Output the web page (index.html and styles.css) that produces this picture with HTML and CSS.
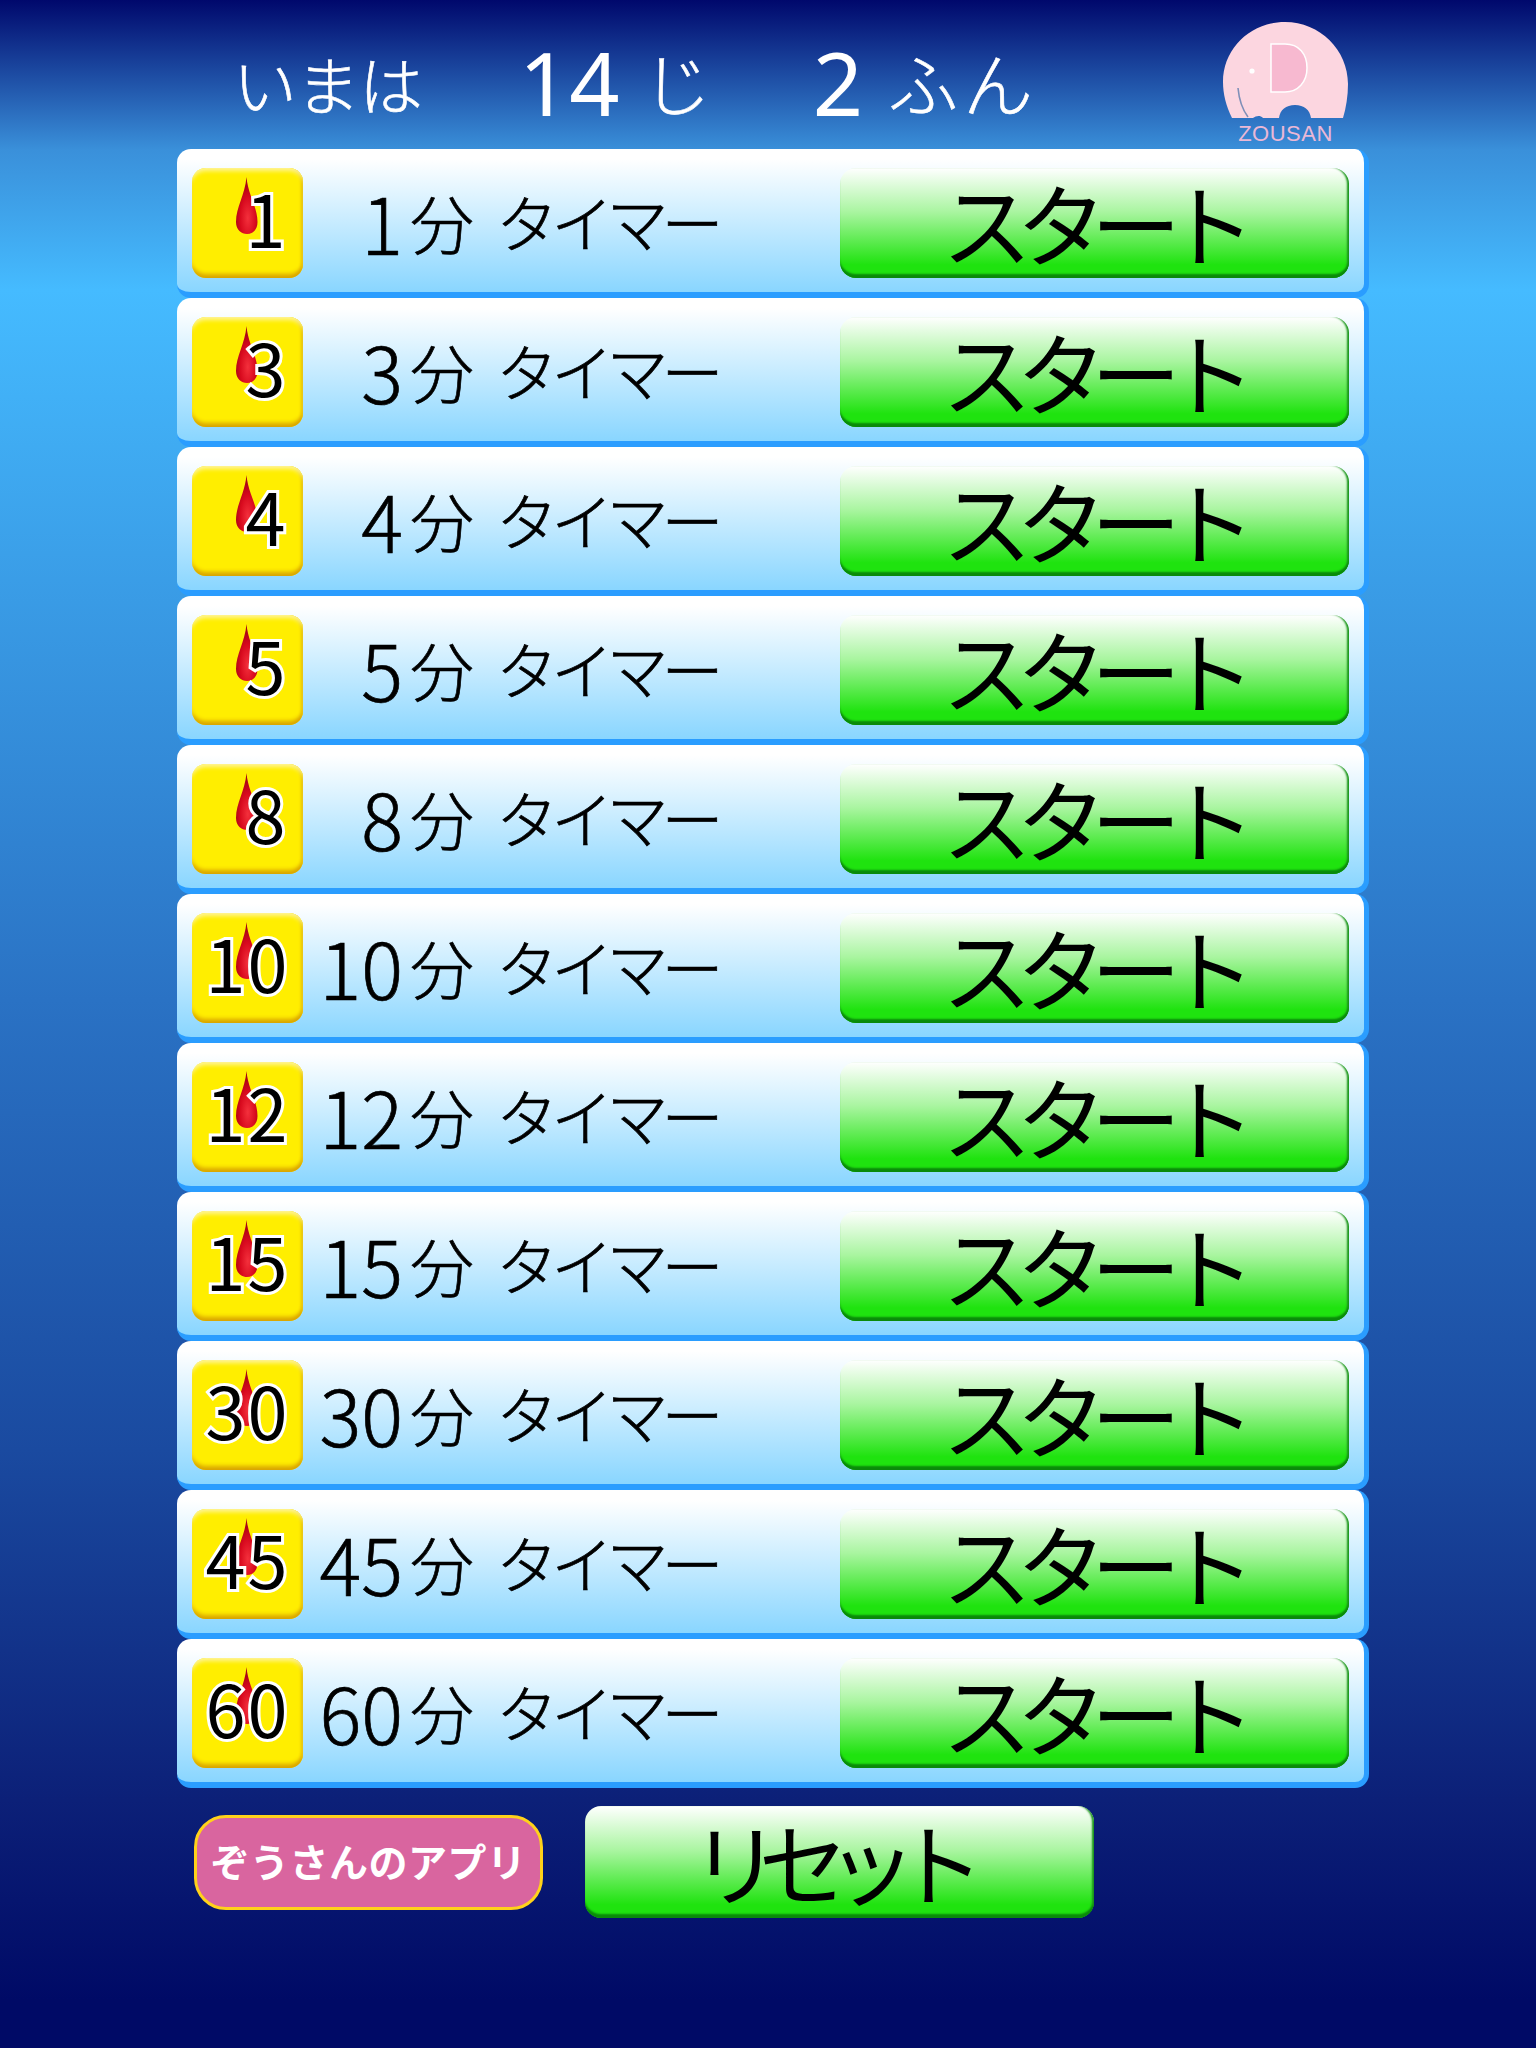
FILE: index.html
```html
<!DOCTYPE html>
<html lang="ja">
<head>
<meta charset="UTF-8">
<title>タイマー</title>
<link rel="stylesheet" href="styles.css">
</head>
<body>
<svg class="defs" width="0" height="0">
  <defs>
    <radialGradient id="dropFill" cx="0.55" cy="0.72" r="0.6">
      <stop offset="0" stop-color="#f4303c"/>
      <stop offset="0.6" stop-color="#d80a1e"/>
      <stop offset="1" stop-color="#a80414"/>
    </radialGradient>
    <symbol id="drop" viewBox="0 0 22 58">
      <path fill="url(#dropFill)" d="M10.500 0c1.500 18 11 30 11 45 0 8-5 12-10.500 12S0 53 0 45C0 30 9 18 10.500 0z"/>
    </symbol>
  </defs>
</svg>
<div id="container">
  <div class="header">
    <span class="now">いまは</span>
    <span class="big hour">14</span>
    <span class="unit ji">じ</span>
    <span class="big minute">2</span>
    <span class="unit fun">ふん</span>
    <div class="logo">
      <svg class="elephant" width="125" height="97" viewBox="0 0 125 97">
        <path fill="#fcd6e0" d="M9 96C3 84 0 72 0 60 0 26 28 0 62 0c35 0 63 28 63 62 0 12-2 24-5 34H88c-1-8-7-13-16-13s-15 5-16 13H40c-3-3-7-2-10 0z"/>
        <path fill="#f7b9d0" stroke="#fff" stroke-width="1.5" d="M48 22h14c14 0 22 10 22 24s-9 24-22 24H48z"/>
        <circle fill="#fff" cx="29" cy="49" r="2.6"/>
        <path fill="none" stroke="#7f8fb8" stroke-width="1.6" d="M15 66c1 11 4 21 10 29"/>
      </svg>
      <div class="logo-name">ZOUSAN</div>
    </div>
  </div>

  <div class="row"><div class="badge single"><svg class="drop" width="22" height="58"><use href="#drop"/></svg><span>1</span></div><div class="name"><span class="mins">1</span><span class="fen">分</span><span class="timer">タイマー</span></div><button class="btn">スタート</button></div>
  <div class="row"><div class="badge single"><svg class="drop" width="22" height="58"><use href="#drop"/></svg><span>3</span></div><div class="name"><span class="mins">3</span><span class="fen">分</span><span class="timer">タイマー</span></div><button class="btn">スタート</button></div>
  <div class="row"><div class="badge single"><svg class="drop" width="22" height="58"><use href="#drop"/></svg><span>4</span></div><div class="name"><span class="mins">4</span><span class="fen">分</span><span class="timer">タイマー</span></div><button class="btn">スタート</button></div>
  <div class="row"><div class="badge single"><svg class="drop" width="22" height="58"><use href="#drop"/></svg><span>5</span></div><div class="name"><span class="mins">5</span><span class="fen">分</span><span class="timer">タイマー</span></div><button class="btn">スタート</button></div>
  <div class="row"><div class="badge single"><svg class="drop" width="22" height="58"><use href="#drop"/></svg><span>8</span></div><div class="name"><span class="mins">8</span><span class="fen">分</span><span class="timer">タイマー</span></div><button class="btn">スタート</button></div>
  <div class="row"><div class="badge"><svg class="drop" width="22" height="58"><use href="#drop"/></svg><span>10</span></div><div class="name"><span class="mins">10</span><span class="fen">分</span><span class="timer">タイマー</span></div><button class="btn">スタート</button></div>
  <div class="row"><div class="badge"><svg class="drop" width="22" height="58"><use href="#drop"/></svg><span>12</span></div><div class="name"><span class="mins">12</span><span class="fen">分</span><span class="timer">タイマー</span></div><button class="btn">スタート</button></div>
  <div class="row"><div class="badge"><svg class="drop" width="22" height="58"><use href="#drop"/></svg><span>15</span></div><div class="name"><span class="mins">15</span><span class="fen">分</span><span class="timer">タイマー</span></div><button class="btn">スタート</button></div>
  <div class="row"><div class="badge"><svg class="drop" width="22" height="58"><use href="#drop"/></svg><span>30</span></div><div class="name"><span class="mins">30</span><span class="fen">分</span><span class="timer">タイマー</span></div><button class="btn">スタート</button></div>
  <div class="row"><div class="badge"><svg class="drop" width="22" height="58"><use href="#drop"/></svg><span>45</span></div><div class="name"><span class="mins">45</span><span class="fen">分</span><span class="timer">タイマー</span></div><button class="btn">スタート</button></div>
  <div class="row"><div class="badge"><svg class="drop" width="22" height="58"><use href="#drop"/></svg><span>60</span></div><div class="name"><span class="mins">60</span><span class="fen">分</span><span class="timer">タイマー</span></div><button class="btn">スタート</button></div>

  <div class="footer">
    <div class="apps">ぞうさんのアプリ</div>
    <button class="btn reset">リセット</button>
  </div>
</div>
</body>
</html>
```
FILE: styles.css
```css
* {
  box-sizing: border-box;
}
body {
  margin: 0;
  height: 2048px;
  overflow: hidden;
  font-family: "Noto Sans CJK JP", "Noto Sans", sans-serif;
  background: linear-gradient(#00086c 0, #3a90da 150px, #45bbff 290px, #2a72c4 1000px, #1a4aa0 1450px, #0c2078 1800px, #000a66 2000px);
}
.defs {
  position: absolute;
}
#container {
  width: 1192px;
  margin-left: 177px;
}
.header {
  height: 149px;
  display: flex;
  align-items: center;
  padding-top: 14px;
  color: #fff;
  font-weight: 300;
}
.now {
  margin-left: 56px;
  width: 286px;
  font-size: 64px;
  letter-spacing: -1px;
  -webkit-text-stroke: 0.6px #fff;
}
.big {
  font-size: 88px;
  font-family: "Noto Sans", sans-serif;
  font-weight: 400;
  line-height: 1;
}
.unit {
  font-size: 68px;
  -webkit-text-stroke: 0.6px #fff;
}
.ji {
  margin-left: 23px;
  width: 170px;
}
.fun {
  margin-left: 25px;
  font-size: 70px;
  letter-spacing: 5px;
}
.logo {
  margin-left: auto;
  margin-right: 21px;
  align-self: flex-start;
  margin-top: 8px;
  width: 125px;
  text-align: center;
}
.elephant {
  display: block;
}
.logo-name {
  font-family: "Liberation Sans", sans-serif;
  font-size: 22px;
  line-height: 22px;
  margin-top: 4px;
  letter-spacing: 0.5px;
  color: #eab8d6;
}

.row {
  height: 149px;
  display: flex;
  align-items: flex-start;
  padding: 19px 10px 0 15px;
  background: linear-gradient(#fff 0, #fff 10px, #8ad6ff 142px);
  border-right: 5px solid #2a9dff;
  border-bottom: 6px solid #2a9dff;
  border-radius: 14px;
}
.badge {
  position: relative;
  flex: none;
  width: 111px;
  height: 110px;
  padding-bottom: 12px;
  display: flex;
  align-items: center;
  justify-content: center;
  border-radius: 14px;
  background: #ffee00;
  box-shadow: inset 0 5px 4px -2px #fff59a, inset 0 -6px 4px -2px #d9a400, inset -3px 0 3px -1px #e8c000;
}
.single {
  padding-left: 38px;
}
.drop {
  position: absolute;
  left: 44px;
  top: 9px;
}
.badge span {
  position: relative;
  font-size: 72px;
  line-height: 1;
  letter-spacing: 2px;
  color: #000;
  -webkit-text-stroke: 6px #fff;
  paint-order: stroke fill;
  font-weight: 400;
}
.name {
  flex: none;
  width: 537px;
  height: 110px;
  padding-bottom: 4px;
  display: flex;
  align-items: center;
  color: #000;
  font-weight: 300;
  -webkit-text-stroke: 0.7px #000;
}
.mins {
  width: 100px;
  text-align: right;
  font-size: 78px;
  letter-spacing: 0;
}
.fen {
  margin-left: 7px;
  font-size: 64px;
}
.timer {
  margin-left: 22px;
  font-size: 62px;
  letter-spacing: -6.800px;
}
.btn {
  flex: none;
  width: 509px;
  height: 110px;
  padding: 0 7px 4px 0;
  border: 0;
  border-radius: 16px;
  font: inherit;
  font-size: 90px;
  line-height: 1;
  letter-spacing: -15.500px;
  color: #000;
  background: linear-gradient(#fff 0, #a9f5a0 40%, #1fe30f 88%);
  box-shadow: inset 0 -5px 2px -1px #0a8a0a, inset -3px 0 2px -1px #1b961b;
}
.footer {
  display: flex;
  align-items: center;
  margin-top: 18px;
  padding-left: 17px;
}
.apps {
  width: 349px;
  height: 95px;
  border: 3px solid #ffd21a;
  border-radius: 32px;
  background: #d9659f;
  color: #fff;
  font-size: 39px;
  font-weight: 700;
  letter-spacing: 0.500px;
  line-height: 85px;
  text-align: center;
}
.reset {
  margin-left: 42px;
  height: 112px;
  padding-right: 26px;
  letter-spacing: -22px;
}
```
